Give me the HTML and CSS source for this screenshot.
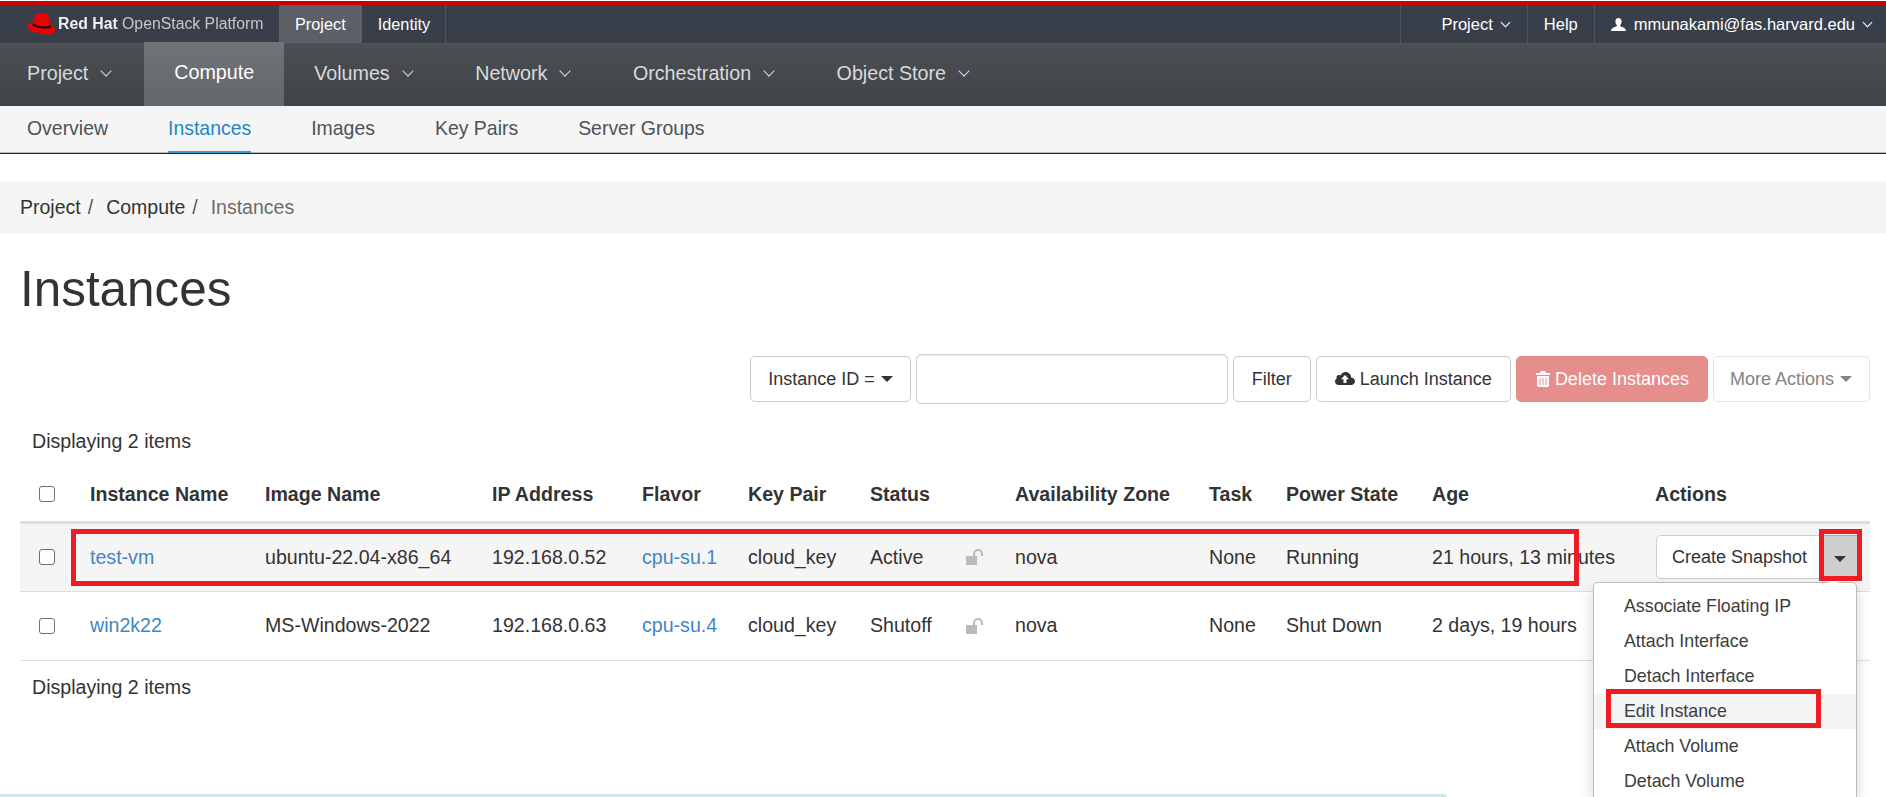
FILE: index.html
```html
<!DOCTYPE html>
<html lang="en">
<head>
  <meta charset="UTF-8">
  <meta name="viewport" content="width=device-width, initial-scale=1.0">
  <title>Instances</title>
  <link rel="stylesheet" href="styles.css">
</head>
<body>
  <header class="topbar">
    <a class="brand">
      <svg class="hat" viewBox="0 0 28 22" width="28" height="22">
        <path fill="#e00" d="M0 13C1 10 4.500 9 6 10L8 3C9 1 11 .5 13 1c2 .5 4-.5 5.500-.5 1.500 0 2.500 1 3 3L23 10.500c3 1.500 5 3.500 5 6.500 0 3-2 4.500-5 4.500C13 22 0 18 0 13z"/>
        <path fill="#111" d="M6 10c4 3 12 5 17.500 2l.7 2.500C18 17 9 15 5.500 12.500z"/>
      </svg>
      <span class="brand-text"><b>Red Hat</b> OpenStack Platform</span>
    </a>
    <a class="toptab toptab-on">Project</a>
    <a class="toptab toptab-last">Identity</a>
    <div class="topright">
      <a class="toplink toplink-project">Project <i class="chev"></i></a>
      <a class="toplink">Help</a>
      <a class="toplink toplink-user">
        <svg class="usericon" viewBox="0 0 16 16" width="15" height="15">
          <path fill="#fff" d="M8 1c2.200 0 3.300 1.700 3.300 3.700 0 1.500-.6 3-1.500 3.800v1.200c0 .7 4.700 1.500 5.700 3.300.3.600.3 1.500.3 2H.2c0-.5 0-1.400.3-2 1-1.800 5.700-2.600 5.700-3.300V8.500c-.9-.8-1.500-2.300-1.500-3.800C4.700 2.700 5.800 1 8 1z"/>
        </svg>
        mmunakami@fas.harvard.edu <i class="chev"></i>
      </a>
    </div>
  </header>

  <nav class="mainnav">
    <a class="mainitem">Project <i class="chev chev-big"></i></a>
    <a class="mainitem mainitem-on">Compute</a>
    <a class="mainitem">Volumes <i class="chev chev-big"></i></a>
    <a class="mainitem">Network <i class="chev chev-big"></i></a>
    <a class="mainitem">Orchestration <i class="chev chev-big"></i></a>
    <a class="mainitem">Object Store <i class="chev chev-big"></i></a>
  </nav>

  <nav class="subnav">
    <a class="subitem">Overview</a>
    <a class="subitem subitem-on">Instances</a>
    <a class="subitem">Images</a>
    <a class="subitem">Key Pairs</a>
    <a class="subitem">Server Groups</a>
  </nav>

  <main class="content">
    <ol class="crumbs">
      <li class="crumb">Project</li>
      <li class="crumb-sep">/</li>
      <li class="crumb">Compute</li>
      <li class="crumb-sep">/</li>
      <li class="crumb crumb-on">Instances</li>
    </ol>

    <h1 class="title">Instances</h1>

    <div class="toolbar">
      <button class="btn btn-select" type="button">Instance ID = <i class="caret"></i></button>
      <input class="filter-input" type="text">
      <button class="btn" type="button">Filter</button>
      <button class="btn" type="button">
        <svg class="btn-icon" viewBox="0 0 20 16" width="20" height="16">
          <path fill="#333" fill-rule="evenodd" d="M16.200 6.700C16.200 3.500 13.700 1 10.600 1 8.300 1 6.300 2.400 5.500 4.400 5 4.100 4.500 4 3.900 4 2.500 4 1.500 5.100 1.500 6.500c0 .4.100.7.200 1C.7 8.200 0 9.300 0 10.500 0 12.400 1.600 14 3.500 14h12.800c2.100 0 3.700-1.700 3.700-3.700 0-1.900-1.600-3.500-3.800-3.600zM10 4l4 4.300h-2.500V12h-3V8.300H6z"/>
        </svg>
        Launch Instance
      </button>
      <button class="btn btn-danger" type="button">
        <svg class="btn-icon" viewBox="0 0 14 16" width="14" height="16">
          <path fill="#fff" fill-rule="evenodd" d="M5 0h4l1 2h4v2H0V2h4zM1 5h12v9.500c0 .8-.7 1.500-1.500 1.500h-9C1.700 16 1 15.300 1 14.500zm2.500 2v7h1V7zm3 0v7h1V7zm3 0v7h1V7z"/>
        </svg>
        Delete Instances
      </button>
      <button class="btn btn-off" type="button">More Actions <i class="caret"></i></button>
    </div>

    <p class="count count-top">Displaying 2 items</p>

    <div class="table-wrap">
      <table class="grid">
        <thead>
          <tr>
            <th class="col-check"><input class="check" type="checkbox"></th>
            <th class="col-name">Instance Name</th>
            <th class="col-image">Image Name</th>
            <th class="col-ip">IP Address</th>
            <th class="col-flavor">Flavor</th>
            <th class="col-key">Key Pair</th>
            <th class="col-status">Status</th>
            <th class="col-zone">Availability Zone</th>
            <th class="col-task">Task</th>
            <th class="col-power">Power State</th>
            <th class="col-age">Age</th>
            <th class="col-actions">Actions</th>
          </tr>
        </thead>
        <tbody>
          <tr class="row-on">
            <td class="cell-check"><input class="check" type="checkbox"></td>
            <td><a class="link">test-vm</a></td>
            <td>ubuntu-22.04-x86_64</td>
            <td>192.168.0.52</td>
            <td><a class="link">cpu-su.1</a></td>
            <td>cloud_key</td>
            <td>
              <div class="status">Active
                <svg class="lock" viewBox="0 0 20 16" width="20" height="16"><path fill="#bbb" d="M0 7h11v9H0z"/><path fill="none" stroke="#bbb" stroke-width="2.200" d="M8 7V5c0-2.200 1.800-4 4-4s4 1.800 4 4v2"/></svg>
              </div>
            </td>
            <td>nova</td>
            <td>None</td>
            <td>Running</td>
            <td class="cell-age">21 hours, 13 minutes</td>
            <td>
              <div class="split">
                <button class="btn split-main" type="button">Create Snapshot</button>
                <button class="split-toggle" type="button"><i class="caret"></i></button>
              </div>
            </td>
          </tr>
          <tr>
            <td class="cell-check"><input class="check" type="checkbox"></td>
            <td><a class="link">win2k22</a></td>
            <td>MS-Windows-2022</td>
            <td>192.168.0.63</td>
            <td><a class="link">cpu-su.4</a></td>
            <td>cloud_key</td>
            <td>
              <div class="status">Shutoff
                <svg class="lock" viewBox="0 0 20 16" width="20" height="16"><path fill="#bbb" d="M0 7h11v9H0z"/><path fill="none" stroke="#bbb" stroke-width="2.200" d="M8 7V5c0-2.200 1.800-4 4-4s4 1.800 4 4v2"/></svg>
              </div>
            </td>
            <td>nova</td>
            <td>None</td>
            <td>Shut Down</td>
            <td>2 days, 19 hours</td>
            <td></td>
          </tr>
        </tbody>
      </table>

      <ul class="menu">
        <li class="menu-item">Associate Floating IP</li>
        <li class="menu-item">Attach Interface</li>
        <li class="menu-item">Detach Interface</li>
        <li class="menu-item menu-item-on">Edit Instance</li>
        <li class="menu-item">Attach Volume</li>
        <li class="menu-item">Detach Volume</li>
      </ul>

      <!-- red boxes drawn on top of the screenshot -->
      <div class="mark mark-row"></div>
      <div class="mark mark-toggle"></div>
      <div class="mark mark-edit"></div>
    </div>

    <p class="count count-bottom">Displaying 2 items</p>
  </main>

  <div class="alert-strip"></div>
</body>
</html>
```

FILE: styles.css
```css
* {
  box-sizing: border-box;
}

html,
body {
  height: 797px;
  overflow: hidden;
}

body {
  margin: 0;
  display: flex;
  flex-direction: column;
  font-family: "Liberation Sans", Arial, sans-serif;
  font-size: 19.600px;
  color: #333;
  background: #fff;
}

/* top bar */
.topbar {
  display: flex;
  align-items: stretch;
  flex: none;
  height: 43px;
  margin-top: 1px;
  border-top: 4px solid #c00;
  border-bottom: 1px solid #51555a;
  background: #393f4a;
  color: #fff;
  font-size: 16.300px;
}

.brand {
  display: flex;
  align-items: center;
  width: 279px;
  padding-left: 27px;
}

.hat {
  flex: none;
}

.brand-text {
  margin-left: 3px;
  font-size: 15.800px;
  color: #c4c6c9;
  white-space: nowrap;
  filter: blur(0.4px);
}

.brand-text b {
  color: #eee;
}

.toptab {
  display: flex;
  align-items: center;
  padding: 0 16px;
}

.toptab-on {
  background: #5c6066;
}

.toptab-last {
  padding-right: 15px;
  border-right: 1px solid #51555a;
}

.topright {
  display: flex;
  margin-left: auto;
  font-size: 16.500px;
}

.toplink {
  display: flex;
  align-items: center;
  gap: 8px;
  padding: 0 16px;
  border-left: 1px solid #51555a;
  white-space: nowrap;
}

.toplink-project {
  padding-left: 40px;
}

.toplink-user {
  padding-right: 13px;
}

.chev {
  display: inline-block;
  width: 7px;
  height: 7px;
  margin: -4px 2px 0 1px;
  border-right: 1.500px solid currentColor;
  border-bottom: 1.500px solid currentColor;
  transform: rotate(45deg);
}

.chev-big {
  width: 8px;
  height: 8px;
  margin: -4px 3.500px 0 14px;
}

/* second row */
.mainnav {
  display: flex;
  flex: none;
  height: 62px;
  background: linear-gradient(#4b4f53, #404348);
  color: #d8dadc;
  font-size: 19.700px;
}

.mainitem {
  display: flex;
  align-items: center;
  padding: 0 30px 4px;
  white-space: nowrap;
}

.mainitem:first-child {
  padding-left: 27px;
  padding-right: 30.500px;
}

.mainitem-on {
  margin-top: -2px;
  background: linear-gradient(#707377, #63666a);
  color: #fff;
}

/* third row */
.subnav {
  display: flex;
  flex: none;
  gap: 60px;
  height: 48px;
  padding-left: 27px;
  border-bottom: 1px solid #222;
  box-shadow: inset 0 -1px 0 #bbb;
  background: #f5f5f5;
  color: #4d5258;
  font-size: 19.450px;
}

.subitem {
  display: flex;
  align-items: center;
  border-bottom: 2px solid transparent;
}

.subitem-on {
  color: #1f88c4;
  border-bottom-color: #3d97cf;
}

/* page */
.content {
  flex: 1;
  padding-top: 27px;
}

.crumbs {
  display: flex;
  align-items: center;
  height: 53px;
  margin: 0;
  padding: 0 20px;
  list-style: none;
  background: #f5f5f5;
  font-size: 19.500px;
}

.crumb-sep {
  margin: 0 13px 0 7px;
  color: #555;
}

.crumb-on {
  color: #6b6b6b;
}

.title {
  margin: 27px 0 0 20px;
  font-size: 49.400px;
  font-weight: 400;
  line-height: 56px;
}

.toolbar {
  display: flex;
  align-items: center;
  justify-content: flex-end;
  gap: 5px;
  margin-top: 37px;
  padding-right: 16px;
}

.btn {
  display: inline-flex;
  align-items: center;
  height: 46px;
  padding: 0 18px;
  border: 1px solid #ccc;
  border-radius: 5px;
  background: #fff;
  color: #333;
  font: inherit;
  font-size: 18px;
  white-space: nowrap;
}

.btn-select {
  padding: 0 17px;
}

.btn-icon {
  margin-right: 5px;
}

.btn-danger {
  padding: 0 18px 0 19px;
  border-color: #e58e8c;
  background: #e58e8c;
  color: #fff;
}

.btn-off {
  padding: 0 17px 0 16px;
  color: #838383;
  border-color: #e2e2e2;
}

.caret {
  display: inline-block;
  margin-left: 6px;
  border-top: 6px solid currentColor;
  border-left: 6px solid transparent;
  border-right: 6px solid transparent;
}

.filter-input {
  width: 312px;
  height: 50px;
  border: 1px solid #ccc;
  border-radius: 5px;
  box-shadow: inset 0 1px 1px rgba(0, 0, 0, 0.08);
}

.count {
  margin: 0;
  line-height: 22px;
}

.count-top {
  margin: 26px 0 0 32px;
}

.table-wrap {
  position: relative;
  margin: 16px 16px 0 20px;
}

.grid {
  width: 100%;
  border-collapse: collapse;
  table-layout: fixed;
}

.grid th {
  height: 54px;
  padding: 0 8px;
  border-bottom: 3px solid #ddd;
  text-align: left;
  white-space: nowrap;
}

.grid td {
  height: 69px;
  padding: 0 8px;
  border-bottom: 1px solid #ddd;
  white-space: nowrap;
}

.row-on td {
  background: #f5f5f5;
}

.col-check {
  width: 62px;
}

.col-name {
  width: 175px;
}

.col-image {
  width: 227px;
}

.col-ip {
  width: 150px;
}

.col-flavor {
  width: 106px;
}

.col-key {
  width: 122px;
}

.col-status {
  width: 145px;
}

.col-zone {
  width: 194px;
}

.col-task {
  width: 77px;
}

.col-power {
  width: 146px;
}

.col-age {
  width: 223px;
}

.check {
  display: block;
  width: 16px;
  height: 16px;
  margin: 0 0 0 11px;
  appearance: none;
  border: 1px solid #6f6f6f;
  border-radius: 3px;
  background: #fff;
}

.link {
  color: #3f86c6;
}

.status {
  display: flex;
  align-items: center;
  justify-content: space-between;
  padding-right: 13px;
}

.split {
  display: flex;
  height: 44px;
  margin: 0 5px 0 1px;
}

.split-main {
  flex: 1;
  height: 44px;
  padding: 0 15px;
  border-radius: 5px 0 0 5px;
}

.split-toggle {
  flex: none;
  width: 38px;
  padding: 0 4px 0 0;
  border: 1px solid #adadad;
  border-radius: 0 5px 5px 0;
  background: #cfcfcf;
  color: #333;
}

.split-toggle .caret {
  margin: 0;
}

/* dropdown over the table, runs on below the window */
.menu {
  position: absolute;
  top: 114px;
  left: 1573px;
  width: 264px;
  height: 215px;
  margin: 0;
  padding: 6px 0 0;
  list-style: none;
  border: 1px solid #bbb;
  border-bottom: none;
  border-radius: 5px 5px 0 0;
  background: #fff;
  box-shadow: 0 6px 14px rgba(0, 0, 0, 0.18);
  color: #3c3c3c;
  font-size: 17.800px;
}

.menu::before {
  content: "";
  position: absolute;
  top: -6px;
  left: 234px;
  border-bottom: 6px solid #fff;
  border-left: 5px solid transparent;
  border-right: 5px solid transparent;
}

.menu-item {
  display: flex;
  align-items: center;
  height: 35px;
  padding-left: 30px;
}

.menu-item-on {
  background: #f4f4f4;
}

.mark {
  position: absolute;
  border: 5px solid #ed1c24;
}

.mark-row {
  top: 61px;
  left: 51px;
  width: 1508px;
  height: 57px;
}

.mark-toggle {
  top: 61px;
  left: 1799px;
  width: 43px;
  height: 52px;
}

.mark-edit {
  top: 221px;
  left: 1586px;
  width: 215px;
  height: 39px;
}

.count-bottom {
  margin: 15px 0 0 32px;
}

.alert-strip {
  flex: none;
  width: 1447px;
  height: 3px;
  border-radius: 0 4px 0 0;
  background: #d0e8ea;
}
```
